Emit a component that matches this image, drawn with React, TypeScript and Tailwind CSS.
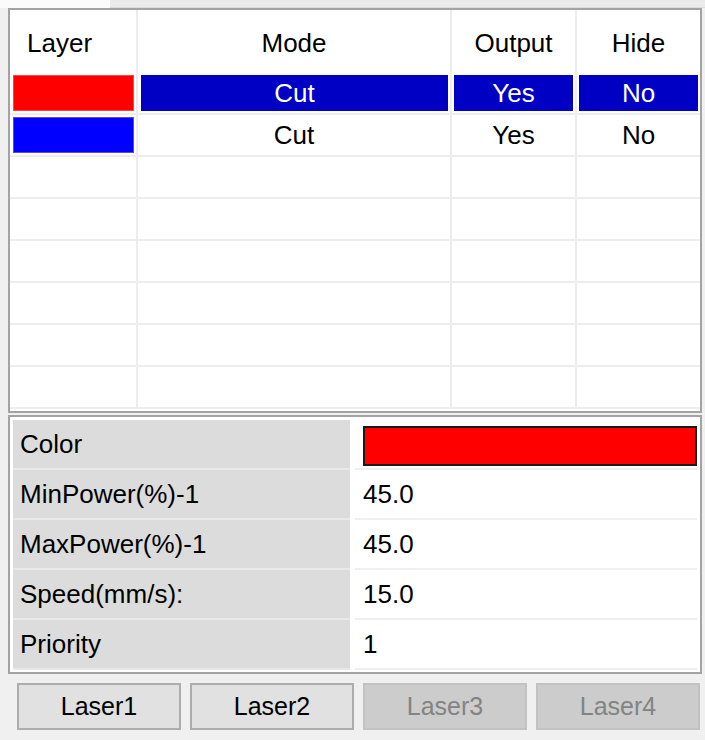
import React from "react";

const cols = ["w-[128px]", "w-[314px]", "w-[125px]", "w-[123px]"];

type Row = { color: string; mode: string; output: string; hide: string; selected: boolean };

const rows: Row[] = [
  { color: "bg-[#ff0000]", mode: "Cut", output: "Yes", hide: "No", selected: true },
  { color: "bg-[#0000ff]", mode: "Cut", output: "Yes", hide: "No", selected: false },
];

const props = [
  { label: "Color", value: "" },
  { label: "MinPower(%)-1", value: "45.0" },
  { label: "MaxPower(%)-1", value: "45.0" },
  { label: "Speed(mm/s):", value: "15.0" },
  { label: "Priority", value: "1" },
];

function Cell({ w, last, children, className }: { w: string; last?: boolean; children?: React.ReactNode; className?: string }) {
  return (
    <div className={`${w} h-[42px] shrink-0 border-b-2 ${last ? "" : "border-r-2"} border-[#ededed] p-[2px]`}>
      <div className={`flex h-full items-center justify-center ${className ?? ""}`}>{children}</div>
    </div>
  );
}

export default function App() {
  return (
    <div
      className="flex h-[740px] w-[705px] flex-col overflow-hidden bg-[#f0f0f0] text-[26px] leading-none text-black"
      style={{ fontFamily: '"Liberation Sans", Arial, sans-serif' }}
    >
      {/* tab strip */}
      <div className="flex h-[8px] shrink-0">
        <div className="w-[110px] bg-[#fbfbfb]" />
        <div className="flex-1 border-b border-[#dcdcdc] bg-[#ebebeb]" />
      </div>

      {/* layer table */}
      <div className="ml-[8px] mr-[3px] h-[405px] shrink-0 border-2 border-[#a3a3a3] bg-white">
        <div className="flex h-[63px]">
          {["Layer", "Mode", "Output", "Hide"].map((h, i) => (
            <div
              key={h}
              className={`${cols[i]} flex shrink-0 items-center pt-[2px] ${i === 0 ? "pl-[17px]" : "justify-center"} ${i < 3 ? "border-r-2 border-[#ededed]" : ""}`}
            >
              {h}
            </div>
          ))}
        </div>
        {rows.map((r, idx) => (
          <div key={idx} className="flex">
            <Cell w={cols[0]} className={`${r.color} ml-px border border-[#f4b0b0]/40`} />
            <Cell w={cols[1]} className={r.selected ? "ml-px bg-[#0000c4] text-white" : ""}>
              {r.mode}
            </Cell>
            <Cell w={cols[2]} className={r.selected ? "bg-[#0000c4] text-white" : ""}>
              {r.output}
            </Cell>
            <Cell w={cols[3]} last className={r.selected ? "bg-[#0000c4] text-white" : ""}>
              {r.hide}
            </Cell>
          </div>
        ))}
        {[0, 1, 2, 3, 4, 5].map((i) => (
          <div key={i} className="flex">
            <Cell w={cols[0]} />
            <Cell w={cols[1]} />
            <Cell w={cols[2]} />
            <Cell w={cols[3]} last />
          </div>
        ))}
      </div>

      {/* properties */}
      <div className="ml-[8px] mr-[3px] mt-[2px] h-[259px] shrink-0 border-2 border-[#a3a3a3] bg-white px-[3px] pt-[3px]">
        {props.map((p) => (
          <div key={p.label} className="flex h-[50px] gap-[5px]">
            <div className="flex w-[337px] shrink-0 items-center border-b-2 border-[#e8e8e8] bg-[#dcdcdc] pl-[7px]">
              {p.label}
            </div>
            <div className="flex flex-1 items-center border-b-2 border-[#efefef] pl-[8px]">
              {p.label === "Color" ? (
                <div className="mr-0 mt-[4px] h-[40px] flex-1 border-2 border-[#1a1a1a] bg-[#ff0000]" />
              ) : (
                p.value
              )}
            </div>
          </div>
        ))}
      </div>

      {/* laser buttons */}
      <div className="mt-[9px] flex gap-[9px] pl-[17px] text-[25px]">
        {["Laser1", "Laser2", "Laser3", "Laser4"].map((l, i) => (
          <div
            key={l}
            className={`flex h-[47px] w-[164px] items-center justify-center border-2 ${
              i < 2 ? "border-[#adadad] bg-[#e1e1e1] text-black" : "border-[#c2c2c2] bg-[#cccccc] text-[#838383]"
            }`}
          >
            {l}
          </div>
        ))}
      </div>
    </div>
  );
}
